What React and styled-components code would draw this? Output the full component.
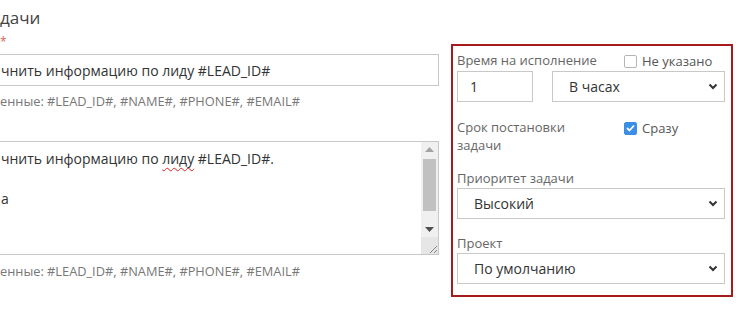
import React from "react";
import styled, { createGlobalStyle } from "styled-components";

const GlobalStyle = createGlobalStyle`
  html, body {
    margin: 0;
    padding: 0;
    background: #fff;
    overflow: hidden;
  }
  body {
    font-family: "Open Sans", "Liberation Sans", sans-serif;
    color: #333;
  }
`;

const Page = styled.div`
  display: flex;
  align-items: flex-start;
  width: 740px;
  height: 313px;
  overflow: hidden;
`;

const LeftColumn = styled.div`
  margin-left: -12px;
  width: 451px;
  flex-shrink: 0;
  display: flex;
  flex-direction: column;
  padding-top: 6px;
`;

const Title = styled.div`
  padding-left: 12px;
  font-size: 17px;
  line-height: 24px;
  color: #444;
`;

const Required = styled.div`
  padding-left: 12px;
  margin-top: 6px;
  height: 12px;
  font-size: 12px;
  line-height: 12px;
  color: #e06060;
`;

const TextBox = styled.div`
  margin-top: 6px;
  height: 30px;
  border: 1px solid #c8c8c8;
  padding-left: 12px;
  display: flex;
  align-items: center;
  font-size: 14px;
  color: #333;
  white-space: nowrap;
`;

const Hint = styled.div`
  padding-left: 12px;
  margin-top: ${(p) => p.$top}px;
  font-size: 12.8px;
  line-height: 18px;
  color: #777;
  white-space: nowrap;
`;

const AreaBox = styled.div`
  margin-top: 31px;
  height: 112px;
  border: 1px solid #c8c8c8;
  display: flex;
`;

const AreaText = styled.div`
  flex: 1;
  padding: 7px 0 0 12px;
  font-size: 14px;
  line-height: 20px;
  color: #333;
  white-space: pre;
`;

const Misspelled = styled.span`
  text-decoration: underline wavy #e02020;
  text-decoration-thickness: 1px;
  text-underline-offset: 3px;
`;

const Scrollbar = styled.div`
  width: 17px;
  display: flex;
  flex-direction: column;
  background: #f0f0f0;
`;

const ScrollArrow = styled.div`
  height: 16px;
  display: flex;
  align-items: center;
  justify-content: center;
`;

const Track = styled.div`
  height: 62px;
  padding: 1px 2px;
  display: flex;
  flex-direction: column;
`;

const Thumb = styled.div`
  height: 52px;
  background: #c1c1c1;
`;

const Resizer = styled.div`
  margin-top: auto;
  height: 17px;
  background: #e6e6e6;
  display: flex;
  align-items: flex-end;
  justify-content: flex-end;
`;

const Panel = styled.div`
  margin-left: 12px;
  margin-top: 44px;
  width: 268px;
  border: 2px solid #a61c1c;
  padding: 4px 6px 11px 4px;
  display: flex;
  flex-direction: column;
`;

const LabelRow = styled.div`
  display: flex;
  align-items: flex-start;
  justify-content: space-between;
  margin-top: ${(p) => p.$top || 0}px;
  height: ${(p) => p.$height}px;
`;

const Label = styled.div`
  font-size: 13px;
  line-height: 18px;
  color: #666;
  width: ${(p) => (p.$width ? `${p.$width}px` : "auto")};
  margin-top: ${(p) => p.$top || 0}px;
`;

const CheckLabel = styled.label`
  display: flex;
  align-items: center;
  gap: 5px;
  width: 101px;
  font-size: 13px;
  line-height: 18px;
  color: #555;
  margin-top: ${(p) => p.$top || 0}px;
`;

const Box = styled.span`
  width: 13px;
  height: 13px;
  box-sizing: border-box;
  border-radius: 2px;
  border: 1px solid ${(p) => (p.$checked ? "#3a8ee6" : "#b5b5b5")};
  background: ${(p) => (p.$checked ? "#3a8ee6" : "#fff")};
  display: flex;
  align-items: center;
  justify-content: center;
`;

const InputRow = styled.div`
  display: flex;
  gap: 19px;
`;

const Field = styled.div`
  height: 29px;
  border: 1px solid #c8c8c8;
  display: flex;
  align-items: center;
  padding-left: ${(p) => p.$pad}px;
  padding-right: 6px;
  width: ${(p) => (p.$width ? `${p.$width}px` : "auto")};
  flex: ${(p) => (p.$grow ? "1 1 0" : "none")};
  font-size: 14px;
  color: #333;
  margin-top: ${(p) => p.$top || 0}px;
`;

const FieldText = styled.span`
  flex: 1;
`;

function Chevron() {
  return (
    <svg width="10" height="7" viewBox="0 0 10 7">
      <path d="M1.5 1.5 L5 5 L8.5 1.5" fill="none" stroke="#333" strokeWidth="2" />
    </svg>
  );
}

function Checkbox({ checked, label, top }) {
  return (
    <CheckLabel $top={top}>
      <Box $checked={checked}>
        {checked && (
          <svg width="9" height="8" viewBox="0 0 9 8">
            <path d="M1 4 L3.5 6.5 L8 1.5" fill="none" stroke="#fff" strokeWidth="1.8" />
          </svg>
        )}
      </Box>
      {label}
    </CheckLabel>
  );
}

function Select({ value, top, grow }) {
  return (
    <Field $pad={16} $top={top} $grow={grow}>
      <FieldText>{value}</FieldText>
      <Chevron />
    </Field>
  );
}

export default function App() {
  return (
    <Page>
      <GlobalStyle />
      <LeftColumn>
        <Title>дачи</Title>
        <Required>*</Required>
        <TextBox>чнить информацию по лиду #LEAD_ID#</TextBox>
        <Hint $top={6}>енные: #LEAD_ID#, #NAME#, #PHONE#, #EMAIL#</Hint>
        <AreaBox>
          <AreaText>
            чнить информацию по <Misspelled>лиду</Misspelled> #LEAD_ID#.
            {"\n\n"}а
          </AreaText>
          <Scrollbar>
            <ScrollArrow>
              <svg width="9" height="5" viewBox="0 0 9 5">
                <path d="M0 5 L4.5 0 L9 5 Z" fill="#a3a3a3" />
              </svg>
            </ScrollArrow>
            <Track>
              <Thumb />
            </Track>
            <ScrollArrow>
              <svg width="9" height="5" viewBox="0 0 9 5">
                <path d="M0 0 L4.5 5 L9 0 Z" fill="#505050" />
              </svg>
            </ScrollArrow>
            <Resizer>
              <svg width="12" height="12" viewBox="0 0 12 12">
                <path d="M11 4 L4 11 M11 8 L8 11" stroke="#888" strokeWidth="1" />
              </svg>
            </Resizer>
          </Scrollbar>
        </AreaBox>
        <Hint $top={7}>енные: #LEAD_ID#, #NAME#, #PHONE#, #EMAIL#</Hint>
      </LeftColumn>

      <Panel>
        <LabelRow $height={21}>
          <Label $top={1}>Время на исполнение</Label>
          <Checkbox label="Не указано" top={2} />
        </LabelRow>
        <InputRow>
          <Field $pad={12} $width={56}>1</Field>
          <Select value="В часах" grow />
        </InputRow>
        <LabelRow $height={36} $top={16}>
          <Label $width={120}>Срок постановки задачи</Label>
          <Checkbox checked label="Сразу" top={1} />
        </LabelRow>
        <Label $top={15}>Приоритет задачи</Label>
        <Select value="Высокий" top={1} />
        <Label $top={15}>Проект</Label>
        <Select value="По умолчанию" top={1} />
      </Panel>
    </Page>
  );
}
